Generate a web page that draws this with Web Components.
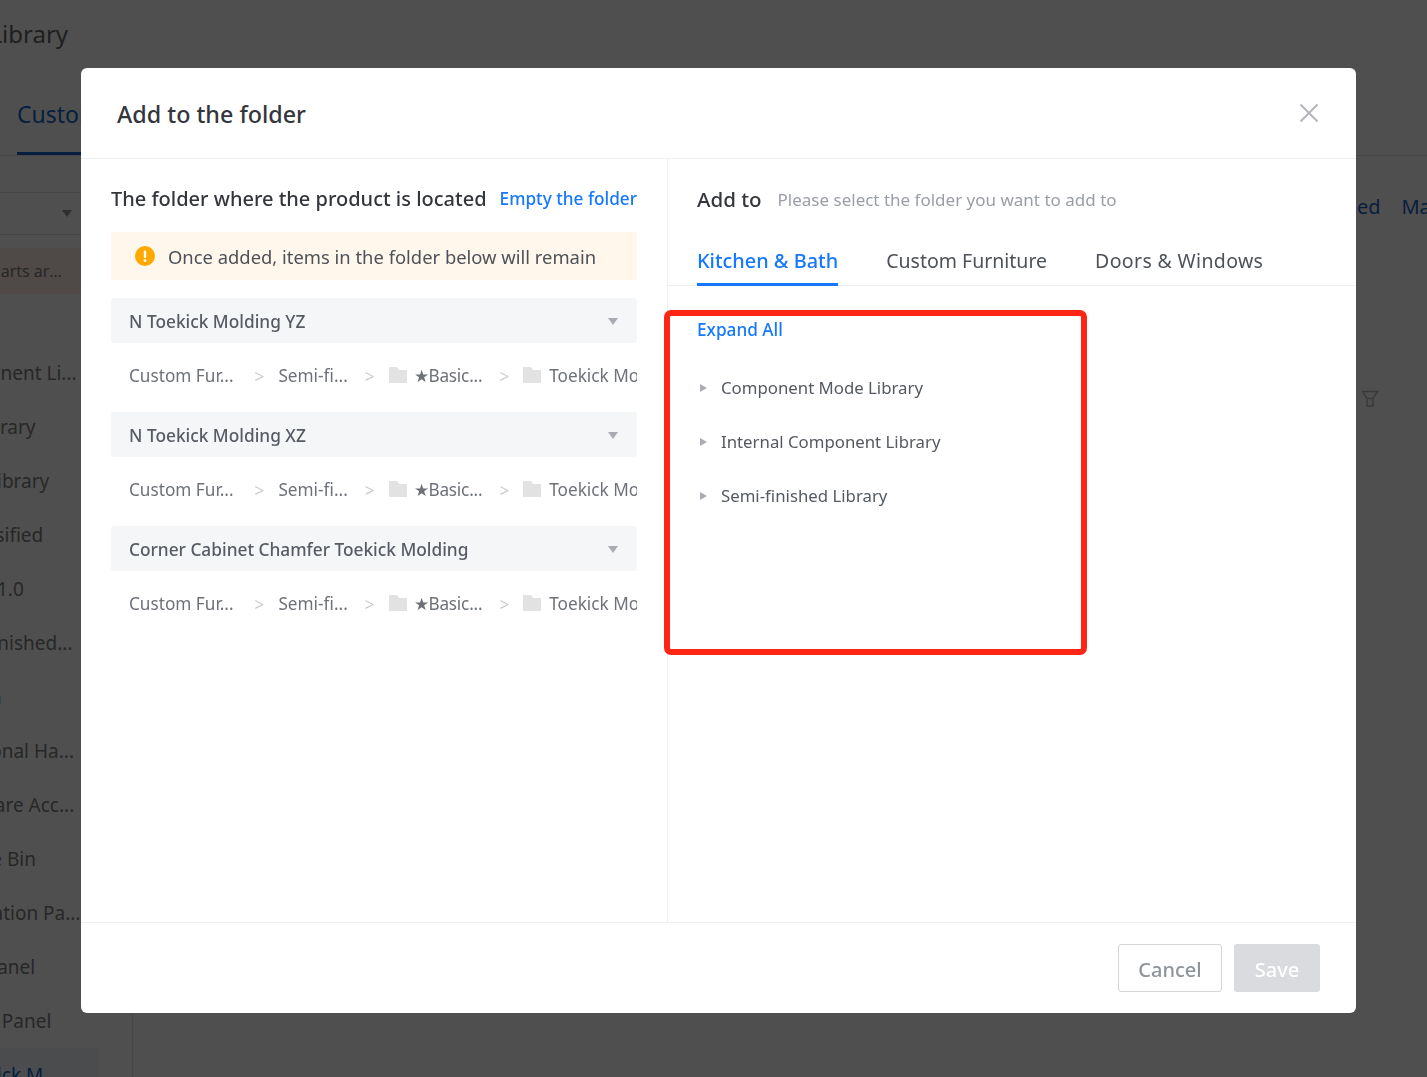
<!DOCTYPE html>
<html lang="en">
<head>
<meta charset="utf-8">
<title>Add to the folder</title>
<style>
  html, body { margin: 0; height: 100%; overflow: hidden; background: #fff; }
  body { font-family: "Noto Sans", "Liberation Sans", sans-serif; }
</style>
</head>
<body>
<lib-page></lib-page>
<folder-dialog></folder-dialog>

<script>
// Page behind the dialog, shifted left so that the sidebar is cut by the window
class LibPage extends HTMLElement {
    constructor() {
        super();
        this.attachShadow({ mode: 'open' });
    }

    connectedCallback() {
        const rows = ['Component Li...', 'Top Library', 'Basic Library', 'Unclassified', 'Model 1.0',
            'Semi-finished...', 'Curtain', 'Functional Ha...', 'Hardware Acc...', 'Recycle Bin',
            'Foundation Pa...', 'Door Panel', 'Ceiling Panel'];
        this.shadowRoot.innerHTML = `
      <style>
        :host { display: block; width: 1427px; height: 1077px; overflow: hidden; color: #7f7f7f; font-size: 20px; }
        .title { height: 68px; margin-left: -150px; font-size: 24px; line-height: 68px; color: #666; }
        .tabs { height: 87px; border-bottom: 1px solid #ddd; display: flex; align-items: flex-start; padding-left: 17px; }
        .tabs span { margin-top: 24px; height: 63px; width: 160px; box-sizing: border-box; font-size: 23px; line-height: 44px; color: #1665c8; border-bottom: 3px solid #1665c8; }
        .body { display: flex; height: 921px; margin-left: -64px; }
        aside { width: 197px; border-right: 1px solid #e4e4e4; box-sizing: border-box; flex: none; padding-top: 36px; font-size: 19px; }
        .pick { height: 41px; border-top: 1px solid #ddd; border-bottom: 1px solid #ddd; position: relative; }
        .pick i { position: absolute; left: 126px; top: 17px; border: 5px solid transparent; border-top: 7px solid #999; border-bottom: 0; }
        .warn { margin-top: 13px; height: 46px; background: #fdeee8; font-size: 16px; line-height: 47px; padding-left: 55px; }
        .warn span { display: block; width: 72px; white-space: nowrap; overflow: hidden; text-overflow: ellipsis; }
        .row { height: 54px; line-height: 54px; width: 146px; white-space: nowrap; overflow: hidden; }
        .rows { margin-top: 52px; }
        .row.on { width: 163px; color: #1665c8; background: #f0f5fc; }
        main { flex: 1; padding: 37px 21px 0 0; display: flex; flex-direction: column; align-items: flex-end; }
        .links { display: flex; gap: 21px; color: #1665c8; line-height: 28px; white-space: nowrap; margin-right: -72px; }
        main svg { margin: 169px 27px 0 0; }
      </style>
      <div class="title">Component Library</div>
      <div class="tabs"><span>Custom Parts</span></div>
      <div class="body">
        <aside>
          <div class="pick"><i></i></div>
          <div class="warn"><span>Parts are not</span></div>
          <div class="rows">
            ${rows.map(r => `<div class="row">${r}</div>`).join('')}
            <div class="row on">N Toekick M</div>
          </div>
        </aside>
        <main>
          <div class="links"><span>Published</span><span>Manage</span></div>
          <svg width="18" height="18" viewBox="0 0 18 18" fill="none" stroke="#bbb" stroke-width="1.5"><path d="M1.500 1.500h15l-4.500 7v7.500H6V8.500z"/><path d="M6 8.500h6"/></svg>
        </main>
      </div>
    `;
    }
}

// Yellow notice with its round icon
class FolderAlert extends HTMLElement {
    constructor() {
        super();
        const root = this.attachShadow({ mode: 'open' });
        root.innerHTML = `
      <style>
        :host { display: flex; align-items: center; gap: 13px; height: 48px; margin-top: 20px; padding-left: 24px; background: #fff7ec; color: #4d5259; font-size: 18.400px; }
        svg { flex: none; }
      </style>
      <svg width="20" height="20" viewBox="0 0 20 20"><circle cx="10" cy="10" r="10" fill="#ffa800"/><rect x="8.800" y="4.500" width="2.400" height="7.500" rx="1" fill="#fff"/><circle cx="10" cy="14.600" r="1.400" fill="#fff"/></svg>
      <span><slot></slot></span>
    `;
    }
}

// One product: grey select and the path of its folder
class ProductFolder extends HTMLElement {
    constructor() {
        super();
        this.attachShadow({ mode: 'open' });
    }

    connectedCallback() {
        const folder = `<svg width="18" height="16" viewBox="0 0 18 16"><path d="M0 0h8l2 3h8v13H0z" fill="#e2e2e2"/></svg>`;
        this.shadowRoot.innerHTML = `
      <style>
        :host { display: block; height: 114px; }
        .select { height: 45px; display: flex; align-items: center; justify-content: space-between; padding: 0 19px 0 18px; background: #f5f6f8; border-radius: 3px; font-size: 17.300px; font-weight: 500; color: #565b64; }
        .select span { margin-top: 2px; }
        .select i { border: 5px solid transparent; border-top: 7px solid #a8abb1; border-bottom: 0; margin-top: 2px; }
        .path { height: 66px; display: flex; align-items: center; padding-left: 18px; overflow: hidden; white-space: nowrap; font-size: 17.200px; color: #6d7178; }
        .path span { margin-top: -2px; }
        .path .first { padding-right: 4px; }
        .path .star { letter-spacing: -.2px; }
        .path b { font-weight: 400; color: #c8cbcf; margin: 0 14px 0 17px; }
        .path svg { flex: none; margin-right: 7px; margin-top: -3px; }
        .path .end { margin-left: 1px; }
      </style>
      <div class="select"><span><slot></slot></span><i></i></div>
      <div class="path">
        <span class="first">Custom Fur...</span><b>&gt;</b><span>Semi-fi...</span><b>&gt;</b>${folder}<span class="star">★Basic...</span><b>&gt;</b>${folder}<span class="end">Toekick Molding</span>
      </div>
    `;
    }
}

// Closed row of the folder tree
class TreeRow extends HTMLElement {
    constructor() {
        super();
        const root = this.attachShadow({ mode: 'open' });
        root.innerHTML = `
      <style>
        :host { display: flex; align-items: center; height: 54px; font-size: 16.800px; color: #555a62; }
        i { width: 0; height: 0; margin: 0 14px 0 3px; border: 4px solid transparent; border-left: 7px solid #a9adb3; border-right: 0; }
        span { margin-top: -2px; }
      </style>
      <i></i><span><slot></slot></span>
    `;
    }
}

// The dialog itself, over a dark layer that covers the page
class FolderDialog extends HTMLElement {
    constructor() {
        super();
        this.attachShadow({ mode: 'open' });
    }

    connectedCallback() {
        this.shadowRoot.innerHTML = `
      <style>
        :host { position: fixed; inset: 0; display: block; background: rgba(0, 0, 0, .69); color: #33363b; }
        .box { position: absolute; left: 81px; top: 68px; width: 1275px; height: 945px; display: flex; flex-direction: column; background: #fff; border-radius: 6px; }
        header { height: 90px; flex: none; display: flex; align-items: center; justify-content: space-between; padding: 0 37px 0 36px; border-bottom: 1px solid #eeeff1; font-size: 23.300px; font-weight: 500; }
        header span { margin-top: 2px; }
        .cols { flex: 1; display: flex; min-height: 0; }
        .left { width: 587px; flex: none; box-sizing: border-box; padding: 25px 30px 0; border-right: 1px solid #eeeff1; }
        .right { flex: 1; padding-top: 26px; position: relative; }
        .head { display: flex; align-items: center; justify-content: space-between; height: 28px; font-size: 20px; font-weight: 500; white-space: nowrap; }
        .link { color: #1677ff; font-size: 17.200px; font-weight: 500; }
        .add { justify-content: flex-start; gap: 16px; padding-left: 29px; font-size: 20.500px; }
        .add small { font-size: 17px; font-weight: 400; color: #9a9ea5; }
        .tabs { display: flex; gap: 48px; height: 73px; box-sizing: border-box; padding: 24px 0 0 29px; border-bottom: 1px solid #eeeff1; font-size: 19.500px; color: #4d5259; }
        .tabs span { height: 49px; box-sizing: border-box; line-height: 48px; }
        .tabs .on { color: #1677ff; font-size: 19.900px; font-weight: 500; border-bottom: 3px solid #1677ff; }
        .tabs .last { letter-spacing: .35px; }
        .tree { padding: 30px 0 0 29px; }
        .expand { line-height: 28px; margin-bottom: 17px; }
        .mark { position: absolute; left: -4px; top: 151px; width: 423px; height: 345px; box-sizing: border-box; border: 6px solid #ff2616; border-radius: 7px; }
        footer { height: 91px; flex: none; display: flex; align-items: center; justify-content: flex-end; gap: 12px; padding: 0 36px; border-top: 1px solid #eeeff1; box-sizing: border-box; }
        footer span { height: 48px; box-sizing: border-box; display: flex; align-items: center; justify-content: center; border-radius: 3px; font-size: 20px; font-weight: 500; padding-top: 2px; }
        .cancel { width: 104px; border: 1px solid #d3d5d9; color: #8f949b; }
        .save { width: 86px; background: #d9dbde; color: #fff; }
      </style>
      <div class="box">
        <header>
          <span>Add to the folder</span>
          <svg width="20" height="20" viewBox="0 0 20 20" stroke="#b4b6bb" stroke-width="2"><path d="M1.500 1.500l17 17M18.500 1.500l-17 17"/></svg>
        </header>
        <div class="cols">
          <section class="left">
            <div class="head"><span>The folder where the product is located</span><span class="link">Empty the folder</span></div>
            <folder-alert>Once added, items in the folder below will remain</folder-alert>
            <div style="height:18px"></div>
            <product-folder>N Toekick Molding YZ</product-folder>
            <product-folder>N Toekick Molding XZ</product-folder>
            <product-folder>Corner Cabinet Chamfer Toekick Molding</product-folder>
          </section>
          <section class="right">
            <div class="head add"><span>Add to</span><small>Please select the folder you want to add to</small></div>
            <div class="tabs"><span class="on">Kitchen &amp; Bath</span><span>Custom Furniture</span><span class="last">Doors &amp; Windows</span></div>
            <div class="tree">
              <div class="link expand">Expand All</div>
              <tree-row>Component Mode Library</tree-row>
              <tree-row>Internal Component Library</tree-row>
              <tree-row>Semi-finished Library</tree-row>
            </div>
            <div class="mark"></div>
          </section>
        </div>
        <footer><span class="cancel">Cancel</span><span class="save">Save</span></footer>
      </div>
    `;
    }
}

customElements.define('lib-page', LibPage);
customElements.define('folder-alert', FolderAlert);
customElements.define('product-folder', ProductFolder);
customElements.define('tree-row', TreeRow);
customElements.define('folder-dialog', FolderDialog);
</script>
</body>
</html>
